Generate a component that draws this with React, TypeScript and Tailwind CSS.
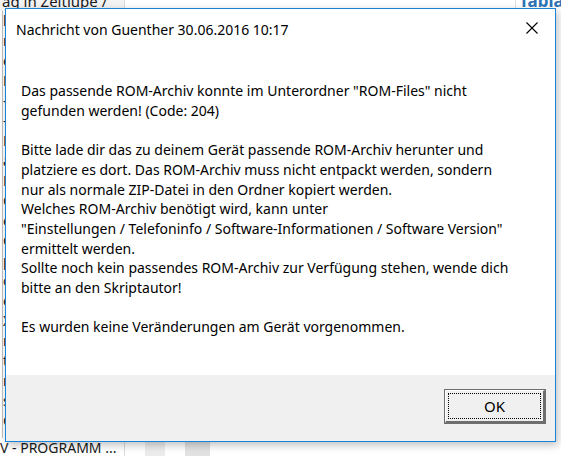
import React from "react";

const leftItems = ["lu", "r", "es", "K", "-", "-", "K", "a", "ER", "C", "e", "G", "p", "c", "e", "X", "n", "t", "r", "s", "G", "o"];

export default function App() {
  return (
    <div className="relative w-[561px] h-[456px] overflow-hidden bg-white font-['Noto_Sans',sans-serif] text-[#000]">
      {/* background page */}
      <div className="flex h-full">
        <div className="w-[125px] flex flex-col border-r border-[#d9d9d9] bg-white">
          <div className="h-[20px] -mt-[9px] bg-[#f3f3f3] text-[15px] leading-[20px] pl-[2px] text-[#1a1a1a] whitespace-nowrap">ag in Zeitlupe /</div>
          <div className="flex-1 flex flex-col border-l border-[#bfbfbf] ml-[2px]">
            {leftItems.slice(0, 21).map((t, i) => (
              <div key={i} className="h-[20px] text-[14px] leading-[20px] text-[#222] whitespace-nowrap">{t}</div>
            ))}
          </div>
          <div className="h-[22px] -mb-[4px] text-[14px] leading-[20px] text-[#1a1a1a] whitespace-nowrap">V - PROGRAMM ...</div>
        </div>
        <div className="flex-1 flex flex-col">
          <div className="h-[10px] flex justify-end">
            <div className="w-[46px] -mt-[9px] text-[17px] font-bold text-[#2e74b5] leading-[20px] border-l border-[#e0e0e0] pl-[3px] whitespace-nowrap overflow-hidden">Tabla</div>
          </div>
          <div className="flex-1"></div>
          <div className="h-[20px] flex">
            <div className="w-[20px]"></div>
            <div className="w-[20px] bg-[#ececec]"></div>
            <div className="w-[20px]"></div>
            <div className="w-[25px] bg-[#e2e2e2]"></div>
          </div>
        </div>
      </div>

      {/* dialog */}
      <div className="absolute left-[5px] top-[8px] w-[551px] h-[434px] border border-[#1883d7] bg-white flex flex-col shadow-[2px_3px_8px_rgba(0,0,0,0.25)]">
        <div className="h-[42px] flex items-start justify-between">
          <div className="pl-[10px] pt-[11px] text-[14px] leading-[20px] text-[#000]">Nachricht von Guenther 30.06.2016 10:17</div>
          <div className="w-[46px] h-[32px] flex items-center justify-center mt-[3px]">
            <svg width="12" height="12" viewBox="0 0 12 12">
              <path d="M0.5 0.5 L11.5 11.5 M11.5 0.5 L0.5 11.5" stroke="#000" strokeWidth="1.1" fill="none" />
            </svg>
          </div>
        </div>
        <div className="flex-1 pl-[15px] pt-[30px] text-[14px] leading-[19.7px] text-[#000]">
          <p>Das passende ROM-Archiv konnte im Unterordner "ROM-Files" nicht<br />gefunden werden! (Code: 204)</p>
          <p className="mt-[19.7px]">
            Bitte lade dir das zu deinem Gerät passende ROM-Archiv herunter und<br />
            platziere es dort. Das ROM-Archiv muss nicht entpackt werden, sondern<br />
            nur als normale ZIP-Datei in den Ordner kopiert werden.<br />
            Welches ROM-Archiv benötigt wird, kann unter<br />
            "Einstellungen / Telefoninfo / Software-Informationen / Software Version"<br />
            ermittelt werden.<br />
            Sollte noch kein passendes ROM-Archiv zur Verfügung stehen, wende dich<br />
            bitte an den Skriptautor!
          </p>
          <p className="mt-[19.7px]">Es wurden keine Veränderungen am Gerät vorgenommen.</p>
        </div>
        <div className="h-[66px] bg-[#f0f0f0] flex justify-end items-start pt-[14px] pr-[9px]">
          <button className="w-[102px] h-[35px] border border-[#6e6e6e] bg-[#6e6e6e] p-0 flex">
            <div className="flex-1 border-t border-l border-white border-b-[2px] border-r-[2px] border-b-[#6e6e6e] border-r-[#6e6e6e] bg-[#f0f0f0] p-[2px] flex">
              <div className="flex-1 border border-dotted border-black flex items-center justify-center text-[15px] leading-[20px]">OK</div>
            </div>
          </button>
        </div>
      </div>
    </div>
  );
}
